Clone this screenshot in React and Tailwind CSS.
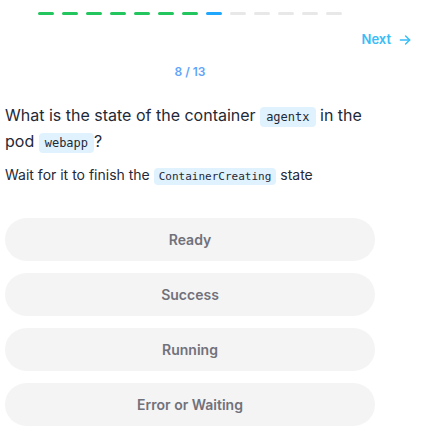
import React from 'react';

const total = 13;
const current = 8;

const Code = ({ children, small }) => (
  <code
    className={
      small
        ? "bg-[#e0f2fe] rounded px-[5px] py-[2px] leading-[14px] font-['DejaVu_Sans_Mono',monospace] text-[11px] text-[#1f2937]"
        : "bg-[#e0f2fe] rounded px-[6px] py-[3px] leading-[16px] font-['DejaVu_Sans_Mono',monospace] text-[12px] text-[#1f2937]"
    }
  >
    {children}
  </code>
);

const App = () => {
  const opsi = ['Ready', 'Success', 'Running', 'Error or Waiting'];

  return (
    <div className="w-[426px] h-[431px] bg-white overflow-hidden font-['Inter',sans-serif]">
      <div className="w-[370px] ml-[5px] pt-3 flex justify-center gap-2">
        {Array.from({ length: total }).map((_, i) => (
          <div
            key={i}
            className={
              i < current - 1
                ? 'w-4 h-[3px] rounded-full bg-[#22c55e]'
                : i === current - 1
                ? 'w-4 h-[3px] rounded-full bg-[#1ea7fd]'
                : 'w-4 h-[3px] rounded-full bg-[#e8e8e8]'
            }
          />
        ))}
      </div>

      <div className="flex justify-end pr-[14px] mt-[15px]">
        <button className="flex items-center gap-[7px] text-[13px] font-semibold text-[#38bdf8]">
          Next
          <svg width="14" height="14" viewBox="0 0 24 24" fill="none" stroke="currentColor" strokeWidth="2.5" strokeLinecap="round" strokeLinejoin="round">
            <path d="M4 12h16" />
            <path d="M13 5l7 7-7 7" />
          </svg>
        </button>
      </div>

      <div className="w-[370px] ml-[5px]">
        <p className="text-center text-[12px] font-semibold text-[#60a5fa] mt-[13px]">
          {current} / {total}
        </p>

        <h2 className="text-[16px] leading-[26px] text-[#1f2937] mt-[21px]">
          What is the state of the container <Code>agentx</Code> in the pod <Code>webapp</Code>?
        </h2>
        <p className="text-[14px] leading-[20px] text-[#1f2937] mt-[11px]">
          Wait for it to finish the <Code small>ContainerCreating</Code> state
        </p>

        <div className="flex flex-col gap-3 mt-[33px]">
          {opsi.map((o) => (
            <button
              key={o}
              className="w-full h-[43px] rounded-full bg-[#f4f4f5] text-[14px] font-semibold text-[#71717a]"
            >
              {o}
            </button>
          ))}
        </div>
      </div>
    </div>
  );
};

export default App;
